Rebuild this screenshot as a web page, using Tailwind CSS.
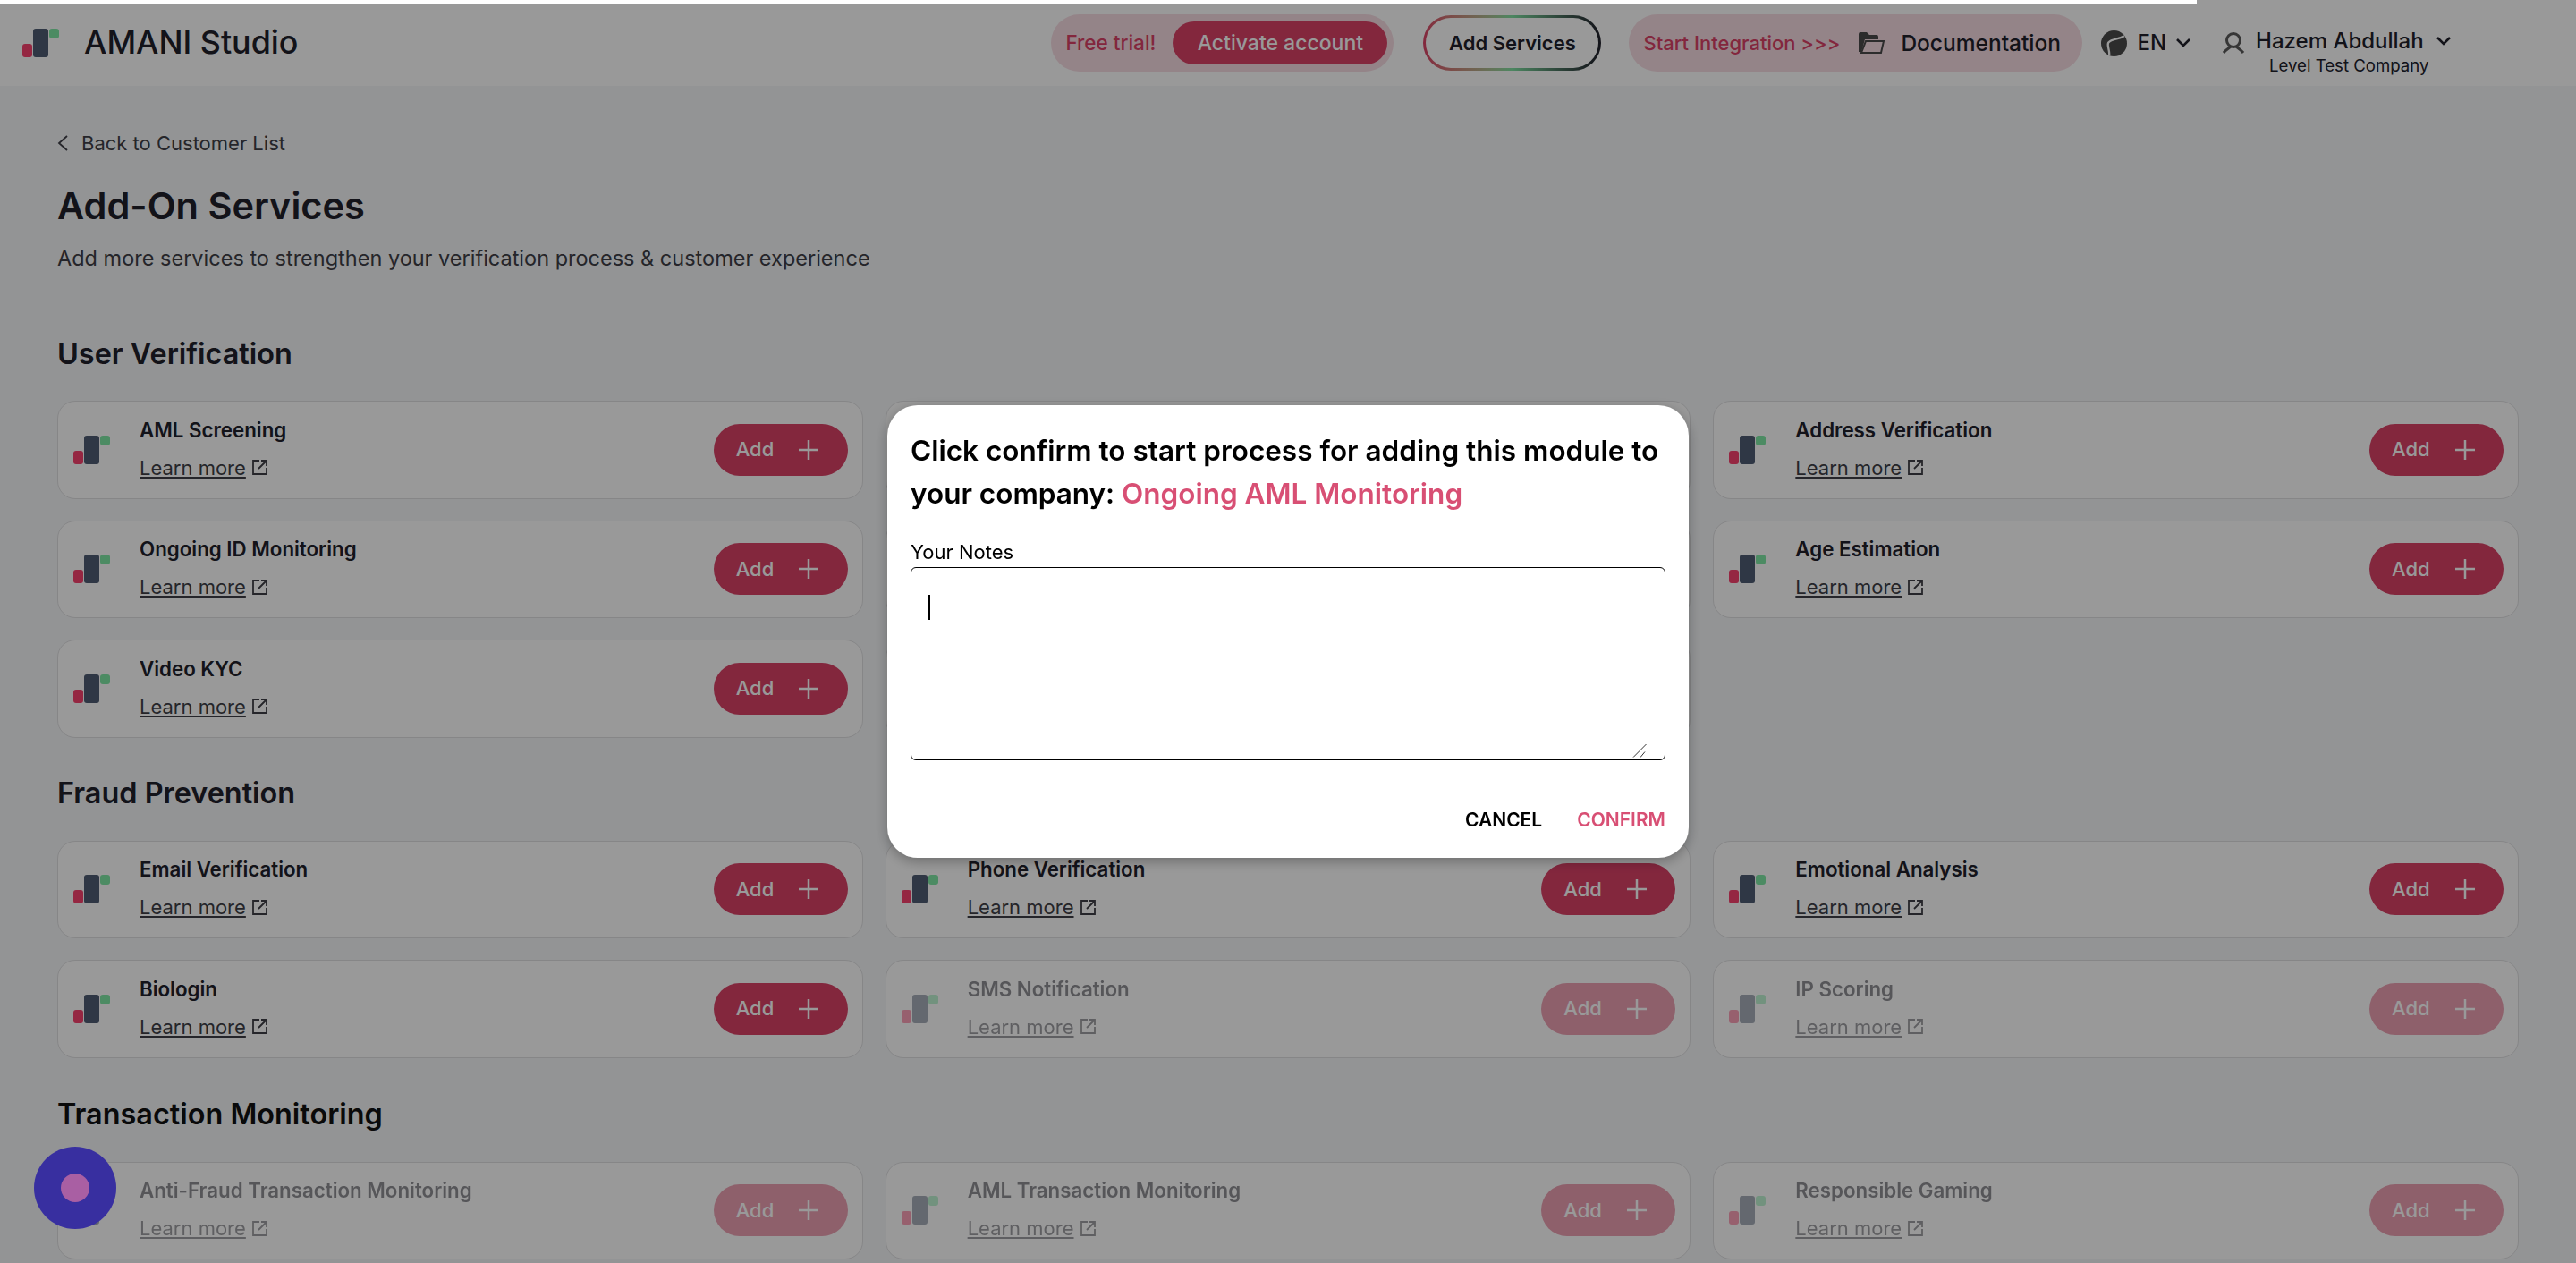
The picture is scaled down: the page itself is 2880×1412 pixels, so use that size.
<!DOCTYPE html>
<html>

<head>
    <meta name="viewport" content="width=device-width, initial-scale=1.0">
    <title>Add-On Services</title>
    <script src="https://cdn.jsdelivr.net/npm/@tailwindcss/browser@4"></script>
</head>

<body class="relative h-[1412px] overflow-hidden bg-[#f5f7f9] font-['Inter',sans-serif] text-[#20202b]">

    <header class="flex h-[96px] items-center bg-white pl-[24px]">
        <svg width="42" height="32" viewBox="0 0 42 32" class="shrink-0">
            <rect x="1" y="17" width="11" height="15" rx="3" fill="#f8426f" />
            <rect x="13" y="0" width="17" height="32" rx="3" fill="#4f5d73" />
            <rect x="31" y="0" width="11" height="11" rx="3" fill="#7fe8a6" />
        </svg>
        <span class="ml-[28px] text-[35.8px] font-medium">AMANI Studio</span>

        <div class="ml-[842px] flex h-[64px] w-[383px] items-center rounded-full bg-[#f7dce3] pl-[16px] pr-[7px]">
            <span class="text-[22.5px] font-medium text-[#da4167]">Free trial!</span>
            <span class="ml-auto flex h-[48px] w-[240px] items-center justify-center rounded-full bg-[#da4167] text-[23px] font-medium text-white">Activate account</span>
        </div>

        <div class="ml-[33px] h-[62px] w-[199px] rounded-full bg-gradient-to-r from-[#da4167] via-[#7fe0a2] to-[#20202b] p-[3px]">
            <div class="flex h-full items-center justify-center rounded-full bg-white text-[22px] font-semibold">Add Services</div>
        </div>

        <div class="ml-[31px] flex h-[64px] w-[507px] items-center rounded-full bg-[#f7dce3] pl-[16px]">
            <span class="text-[22px] font-medium text-[#da4167]">Start Integration &gt;&gt;&gt;</span>
            <svg width="30" height="26" viewBox="0 0 30 26" class="ml-[20px]" fill="#4a4a4a">
                <path d="M1 3a2 2 0 0 1 2-2h7l3 3h8a2 2 0 0 1 2 2v3H8L4 23H1z" />
                <path d="M9 11h20l-3 13H4z" fill="none" stroke="#4a4a4a" stroke-width="2" />
            </svg>
            <span class="ml-[18px] text-[24.5px] font-medium">Documentation</span>
        </div>

        <svg width="29" height="29" viewBox="0 0 28 28" class="ml-[21px]">
            <circle cx="14" cy="14" r="14" fill="#4a4a4a" />
            <path d="M25 6C18 10 12 9 8 13C6 16 9 19 9 27" fill="none" stroke="#fff" stroke-width="2.2" />
        </svg>
        <span class="ml-[11px] text-[24px] font-medium">EN</span>
        <svg width="16" height="10" viewBox="0 0 16 10" class="ml-[11px]" fill="none" stroke="#20202b" stroke-width="2.6">
            <path d="M1 1l7 7 7-7" />
        </svg>

        <svg width="26" height="24" viewBox="0 0 26 24" class="ml-[35px]" fill="none" stroke="#5a5a5a" stroke-width="3">
            <circle cx="13" cy="9" r="7.5" />
            <path d="M2 23c3-4 6-5 8-7M24 23c-3-4-6-5-8-7" />
        </svg>
        <div class="relative ml-[12px] mb-[4px] flex items-center">
            <span class="text-[24px] font-medium">Hazem Abdullah</span>
            <svg width="16" height="10" viewBox="0 0 16 10" class="ml-[14px]" fill="none" stroke="#20202b" stroke-width="2.6">
                <path d="M1 1l7 7 7-7" />
            </svg>
            <span class="absolute left-[15px] top-[32px] whitespace-nowrap text-[18.6px]">Level Test Company</span>
        </div>
    </header>

    <main class="px-[64px] pt-[50px]">
        <a class="flex h-[28px] items-center text-[22px] text-[#3f3f46]">
            <svg width="13" height="18" viewBox="0 0 13 18" class="mr-[14px]" fill="none" stroke="#3f3f46" stroke-width="1.8">
                <path d="M11 1L2 9l9 8" />
            </svg>
            Back to Customer List
        </a>
        <h1 class="mt-[28px] text-[41.5px] font-semibold leading-[56px]">Add-On Services</h1>
        <p class="mt-[14px] text-[23.5px] leading-[34px] text-[#3f3f46]">Add more services to strengthen your verification process &amp; customer experience</p>

        <h2 class="mt-[70px] text-[32.4px] font-semibold leading-[40px]">User Verification</h2>
        <section id="user" class="mt-[32px] grid grid-cols-3 gap-x-[25px] gap-y-[24px]"></section>

        <h2 class="mt-[42px] text-[32.4px] font-semibold leading-[40px]">Fraud Prevention</h2>
        <section id="fraud" class="mt-[33px] grid grid-cols-3 gap-x-[25px] gap-y-[24px]"></section>

        <h2 class="mt-[43px] text-[32.4px] font-semibold leading-[40px] text-[#111]">Transaction Monitoring</h2>
        <section id="transaction" class="mt-[33px] grid grid-cols-3 gap-x-[25px] gap-y-[24px]"></section>
    </main>

    <div class="absolute inset-0 bg-black/40"></div>
    <div class="absolute left-0 top-0 h-[5px] w-[2456px] bg-white"></div>

    <div class="absolute left-[38px] top-[1282px] flex h-[92px] w-[92px] items-center justify-center rounded-full bg-[#382fa0]">
        <div class="h-[32px] w-[32px] rounded-full bg-[#a95fa3]"></div>
    </div>

    <div class="absolute left-[992px] top-[453px] flex h-[506px] w-[896px] flex-col rounded-[34px] bg-white px-[26px] pt-[27px] shadow-[0_4px_14px_rgba(0,0,0,0.3)]">
        <h3 class="text-[31.5px] font-semibold leading-[48px] text-black">Click confirm to start process for adding this module to your company: <span class="text-[#d84f74]">Ongoing AML Monitoring</span></h3>
        <label class="mt-[27px] text-[22px] leading-[28px] text-black">Your Notes</label>
        <div class="relative mt-[3px]">
            <textarea class="block h-[216px] w-[844px] resize-none rounded-[6px] border border-black bg-white outline-none"></textarea>
            <div class="absolute left-[20px] top-[31px] h-[28px] w-[2px] bg-black"></div>
            <svg width="17" height="17" viewBox="0 0 17 17" class="pointer-events-none absolute left-[807px] top-[197px]" stroke="#333" stroke-width="1">
                <path d="M15.5 1L1 15.6M14 9.5L9 15.6" />
            </svg>
        </div>
        <div class="mt-[53px] flex justify-end gap-[39px] text-[21px] font-semibold leading-[28px]">
            <button class="text-black">CANCEL</button>
            <button class="text-[#d84f74]">CONFIRM</button>
        </div>
    </div>

    <script>
        const card = ([name, off]) => {
            if (!name) return '<div class="h-[109.5px] rounded-[20px] border border-[#e0e0e2] bg-white"></div>';
            return `<div class="flex h-[109.5px] items-center rounded-[20px] border border-[#e0e0e2] bg-white pl-[16px] pr-[16px]">
                <div class="flex w-full items-center ${off ? 'opacity-50' : ''}">
                    <svg width="42" height="32" viewBox="0 0 42 32" class="shrink-0"><rect x="1" y="17" width="11" height="15" rx="3" fill="#f8426f" /><rect x="13" y="0" width="17" height="32" rx="3" fill="#4f5d73" /><rect x="31" y="0" width="11" height="11" rx="3" fill="#7fe8a6" /></svg>
                    <div class="ml-[33px]">
                        <div class="-mt-[2px] text-[22.3px] font-semibold leading-[30px]">${name}</div>
                        <a class="mt-[12px] flex items-center text-[22px] leading-[30px] text-[#3f3f46]"><span class="underline">Learn more</span><svg width="19" height="19" viewBox="0 0 19 19" class="ml-[6px]" fill="none" stroke="#3f3f46" stroke-width="1.8"><path d="M9 2H2v15h15v-7M8 11L17 2M11 2h6v6" /></svg></a>
                    </div>
                    <button class="ml-auto flex h-[58px] w-[150px] items-center rounded-full bg-[#da4167] pl-[25px] text-[22px] font-medium text-white">Add<svg width="22" height="22" viewBox="0 0 22 22" class="ml-[28px]" stroke="#fff" stroke-width="2.5"><path d="M11 0v22M0 11h22" /></svg></button>
                </div>
            </div>`;
        };

        // the middle column of the first section sits behind the dialog
        const sections = {
            user: [['AML Screening'], [''], ['Address Verification'], ['Ongoing ID Monitoring'], [''], ['Age Estimation'], ['Video KYC'], ['']],
            fraud: [['Email Verification'], ['Phone Verification'], ['Emotional Analysis'], ['Biologin'], ['SMS Notification', true], ['IP Scoring', true]],
            transaction: [['Anti-Fraud Transaction Monitoring', true], ['AML Transaction Monitoring', true], ['Responsible Gaming', true]],
        };

        Object.keys(sections).forEach((id) => {
            document.getElementById(id).innerHTML = sections[id].map(card).join('');
        });
    </script>
</body>

</html>
